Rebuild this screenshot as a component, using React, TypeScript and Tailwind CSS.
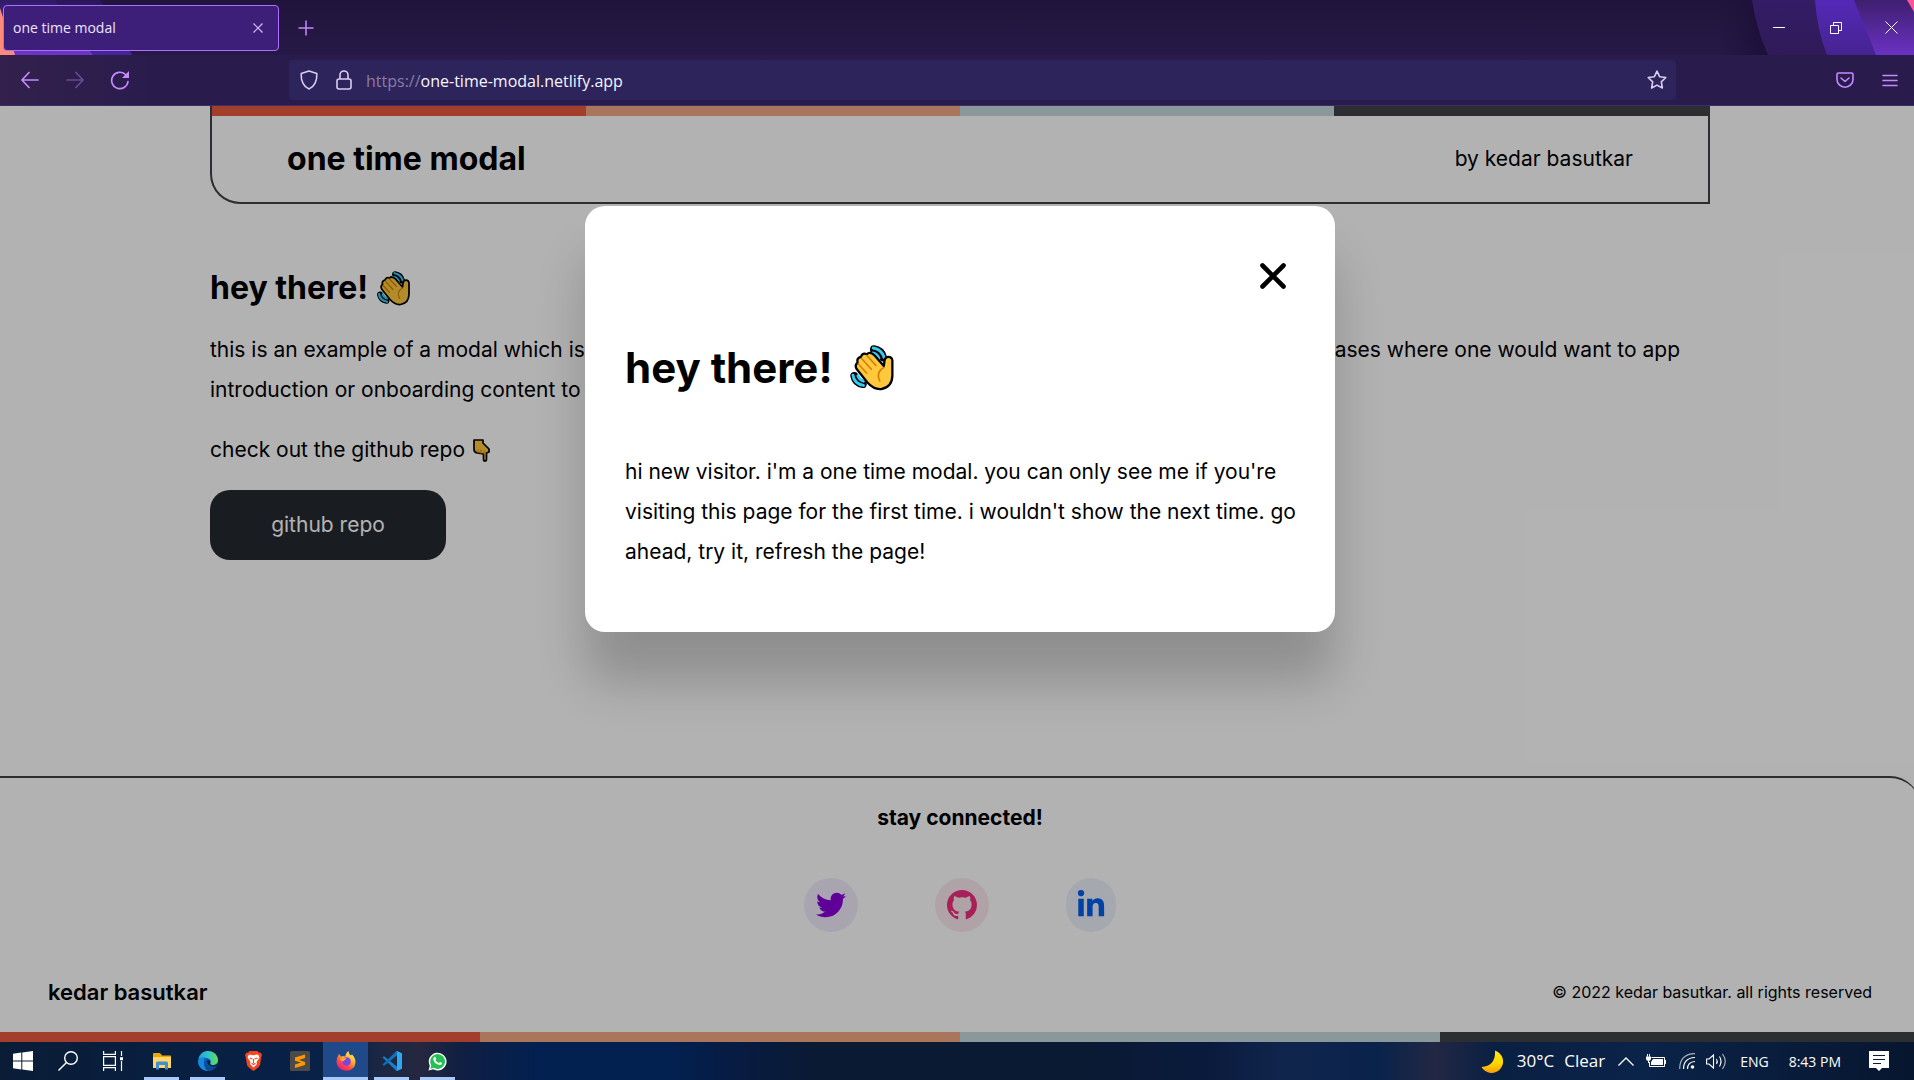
import { FaLinkedinIn, FaTwitter } from "react-icons/fa";
import { BsGithub } from "react-icons/bs";
import type { ReactNode } from "react";

function WaveEmoji({ className }: { className: string }) {
  return (
    <svg viewBox="26 28 136 140" className={className} role="img" aria-label="waving hand" strokeLinecap="round" strokeLinejoin="round" fill="none">
      <g stroke="#000" strokeWidth="24">
        <path d="M100 41Q122 44 128 66M40 122Q44 144 66 147" />
      </g>
      <g stroke="#35cbf5" strokeWidth="9">
        <path d="M98 37Q124 42 131 66M97 52Q109 55 115 68M36 120Q40 146 68 151M51 122Q55 134 68 138" />
      </g>
      <path d="M130 92L102 60Q88 46 78 56Q66 50 60 64Q46 68 50 82Q40 90 48 102L80 142Q100 164 122 162Q156 156 156 120L156 76Q155 64 144 64Q134 64 132 76Z" fill="#ffc83d" stroke="#000" strokeWidth="7" />
      <path d="M63 70L92 102M78 60L106 90M52 85L78 114M131 96Q104 110 118 138" stroke="#d67d00" strokeWidth="4.5" />
    </svg>
  );
}

function PointDownEmoji() {
  return (
    <svg viewBox="0 0 18 23" className="h-[23px] w-[18px]" role="img" aria-label="pointing down" strokeLinejoin="round" strokeLinecap="round">
      <path d="M1 1H10V4L16 10V13L13.500 14V20Q13.500 22 12 22Q10.500 22 10.500 20V15L4 14Q1 13.500 1 10Z" fill="#ffc83d" stroke="#000" strokeWidth="1.700" />
      <path d="M5 14V11M8 14.500V11M11 15V12" stroke="#d67d00" strokeWidth="1" />
    </svg>
  );
}

function Stripes() {
  return (
    <div className="grid h-2.5 grid-cols-4">
      <span className="bg-[#ea5a41]" />
      <span className="bg-[#f3aa85]" />
      <span className="bg-[#c6dae0]" />
      <span className="bg-[#404247]" />
    </div>
  );
}

function StripArt() {
  return (
    <>
      <svg className="absolute top-0 left-0 h-[55px] w-[140px]" viewBox="0 0 140 55" aria-hidden="true">
        <defs>
          <linearGradient id="l1" x2="0" y2="1"><stop stopColor="#2f1a66" /><stop offset="1" stopColor="#6f35cb" /></linearGradient>
          <linearGradient id="l2" x2="0" y2="1"><stop stopColor="#2a1858" /><stop offset="1" stopColor="#46259a" /></linearGradient>
        </defs>
        <path d="M55 0H100Q120 25 132 55H93Z" fill="url(#l2)" />
        <path d="M0 0H55L93 55H0Z" fill="url(#l1)" />
        <path d="M0 8L15 55H0Z" fill="#ff8a78" />
      </svg>
      <svg className="absolute top-0 right-0 h-[55px] w-[194px]" viewBox="0 0 194 55" aria-hidden="true">
        <defs>
          <linearGradient id="r0"><stop stopColor="#1d113a" stopOpacity="0" /><stop offset="1" stopColor="#1a0f38" /></linearGradient>
          <linearGradient id="r1" x2="0" y2="1"><stop stopColor="#341d66" /><stop offset="1" stopColor="#301a58" /></linearGradient>
          <linearGradient id="r2" x2="0" y2="1"><stop stopColor="#5429b8" /><stop offset="1" stopColor="#462391" /></linearGradient>
          <linearGradient id="r3" x2="0" y2="1"><stop stopColor="#3f1f70" /><stop offset="1" stopColor="#6a31c2" /></linearGradient>
        </defs>
        <path d="M0 0H35L50 55H0Z" fill="url(#r0)" />
        <path d="M32 0Q36 28 48 55H194V0Z" fill="url(#r1)" />
        <path d="M95 0Q97 30 107 55H194V0Z" fill="url(#r2)" />
        <path d="M134 0L156 55H194V0Z" fill="url(#r3)" />
        <path d="M187 0L194 12V0Z" fill="#ff5596" />
      </svg>
    </>
  );
}

function ChromeButton({ label, children, className = "w-[45px]" }: { label: string; children: ReactNode; className?: string }) {
  return (
    <button aria-label={label} className={`flex h-10 items-center justify-center ${className}`}>
      {children}
    </button>
  );
}

function BrowserChrome() {
  return (
    <header className="font-['Open_Sans',sans-serif]">
      <div className="relative h-[55px] bg-linear-to-b from-[#20143b] to-[#271947]">
        <StripArt />
        <div className="relative flex h-full items-center pl-[3px]">
          <div className="flex h-[46px] w-[276px] items-center justify-between rounded-[4px] border border-[#ac70ff] bg-[#3d1f7a] pl-[9px] text-[14px] text-[#ede5fb]">
            <span>one time modal</span>
            <button aria-label="Close tab" className="flex size-10 items-center justify-center">
              <svg viewBox="0 0 10 10" className="size-2.5" stroke="#d3bdf5" strokeWidth="1.200"><path d="M0.500 0.500L9.500 9.500M9.500 0.500L0.500 9.500" /></svg>
            </button>
          </div>
          <button aria-label="New tab" className="flex h-10 w-[54px] items-center justify-center">
            <svg viewBox="0 0 16 16" className="size-4" stroke="#c689ff" strokeWidth="1.500"><path d="M8 0.500V15.500M0.500 8H15.500" /></svg>
          </button>
          <div className="ml-auto flex">
            <ChromeButton label="Minimize" className="w-[57px]">
              <svg viewBox="0 0 12 12" className="size-3" stroke="#fff"><path d="M0 5.500H12" /></svg>
            </ChromeButton>
            <ChromeButton label="Restore" className="w-[57px]">
              <svg viewBox="0 0 12 12" className="size-3" stroke="#fff" fill="none"><path d="M0.500 3.500H8.500V11.500H0.500ZM3.500 3.500V0.500H11.500V8.500H8.500" /></svg>
            </ChromeButton>
            <ChromeButton label="Close window" className="w-[50px] pl-1">
              <svg viewBox="0 0 13 13" className="size-[13px]" stroke="#fff"><path d="M0.500 0.500L12.500 12.500M12.500 0.500L0.500 12.500" /></svg>
            </ChromeButton>
          </div>
        </div>
      </div>
      <div className="flex h-[51px] items-center border-b border-[#3a2d6c] bg-[#291c4c] bg-linear-to-r from-[#33204c] to-[#291c4c] to-[8%] pl-[7px]">
        <ChromeButton label="Back">
          <svg viewBox="0 0 18 18" className="size-[18px]" stroke="#c689ff" strokeWidth="1.700" fill="none" strokeLinecap="round" strokeLinejoin="round"><path d="M17 9H1M8 1.500L1 9L8 16.500" /></svg>
        </ChromeButton>
        <ChromeButton label="Forward">
          <svg viewBox="0 0 18 18" className="size-[18px] opacity-40" stroke="#c689ff" strokeWidth="1.700" fill="none" strokeLinecap="round" strokeLinejoin="round"><path d="M1 9H17M10 1.500L17 9L10 16.500" /></svg>
        </ChromeButton>
        <ChromeButton label="Reload">
          <svg viewBox="0 0 20 20" className="size-5" stroke="#c689ff" strokeWidth="1.700" fill="none" strokeLinecap="round"><path d="M18 11.500A8.200 8.200 0 1 1 15.500 4.500" /><path d="M19 1V8H12Z" fill="#c689ff" stroke="none" /></svg>
        </ChromeButton>
        <div className="mr-[146px] ml-[147px] flex h-10 flex-1 items-center rounded-[4px] bg-[#2d245b] pl-[11px] text-[16px]">
          <svg viewBox="0 0 18 20" className="h-5 w-[18px]" stroke="#d8cdf2" strokeWidth="1.600" fill="none" strokeLinejoin="round"><path d="M9 1L16.800 3.600C17.300 11 14 17 9 19C4 17 0.700 11 1.200 3.600Z" /></svg>
          <svg viewBox="0 0 16 20" className="ml-[18px] h-5 w-4" stroke="#d8cdf2" strokeWidth="1.600" fill="none"><rect x="1" y="9" width="14" height="10" rx="2" /><path d="M4 9V5A4 4 0 0 1 12 5V9" /></svg>
          <label htmlFor="address" className="ml-[14px] pt-0.5 text-[#8b7ba6]">https://</label>
          <input id="address" defaultValue="one-time-modal.netlify.app" className="min-w-0 flex-1 bg-transparent pt-0.5 text-[#f8f6ff] outline-none" />
          <button aria-label="Bookmark" className="flex h-10 w-[38px] items-center justify-center">
            <svg viewBox="0 0 20 20" className="size-5" stroke="#d8cdf2" strokeWidth="1.600" fill="none" strokeLinejoin="round"><path d="M10 1.200L12.600 6.700L18.800 7.500L14.300 11.800L15.400 18L10 15.100L4.600 18L5.700 11.800L1.200 7.500L7.400 6.700Z" /></svg>
          </button>
        </div>
        <ChromeButton label="Save to Pocket">
          <svg viewBox="0 0 18 16" className="h-4 w-[18px]" stroke="#c689ff" strokeWidth="1.600" fill="none" strokeLinecap="round" strokeLinejoin="round"><path d="M2.500 1H15.500Q17 1 17 2.500V7.500A8 7.700 0 0 1 1 7.500V2.500Q1 1 2.500 1ZM5 6L9 9.500L13 6" /></svg>
        </ChromeButton>
        <ChromeButton label="Menu" className="mr-[2px] w-[45px]">
          <svg viewBox="0 0 16 13" className="h-[13px] w-4" stroke="#c689ff" strokeWidth="1.500" strokeLinecap="round"><path d="M1 1.500H15M1 6.500H15M1 11.500H15" /></svg>
        </ChromeButton>
      </div>
    </header>
  );
}

function Modal() {
  return (
    <div className="absolute inset-0 flex items-start justify-center bg-black/30 pt-[100px]">
      <section role="dialog" aria-modal="true" aria-labelledby="modal-title" className="w-[750px] rounded-[20px] bg-white px-10 pt-10 pb-[60px] shadow-[0_50px_50px_rgba(0,0,0,0.2)]">
        <div className="flex justify-end">
          <button aria-label="Close" className="flex h-[60px] w-11 items-center justify-center">
            <svg viewBox="0 0 26 26" className="size-[26px]" stroke="#000" strokeWidth="4.600" strokeLinecap="round"><path d="M2.500 2.500L23.500 23.500M23.500 2.500L2.500 23.500" /></svg>
          </button>
        </div>
        <h2 id="modal-title" className="mt-8 flex items-center gap-4 text-[42px] leading-[60px] font-bold">
          hey there! <WaveEmoji className="size-[46px]" />
        </h2>
        <p className="mt-[54px] text-[21px] leading-10 whitespace-nowrap">
          hi new visitor. i'm a one time modal. you can only see me if you're
          <br />
          visiting this page for the first time. i wouldn't show the next time. go
          <br />
          ahead, try it, refresh the page!
        </p>
      </section>
    </div>
  );
}

function Page() {
  return (
    <div className="flex h-full flex-col">
      <header className="mx-auto w-[1500px] rounded-bl-[30px] border-2 border-t-0 border-[#404247]">
        <Stripes />
        <div className="flex h-[86px] items-center justify-between px-[75px]">
          <h1 className="text-[32px] font-bold">one time modal</h1>
          <p className="text-[21px]">by kedar basutkar</p>
        </div>
      </header>
      <main className="mx-auto mt-16 w-[1500px] flex-1 text-[21px] leading-10">
        <h2 className="flex items-center gap-2 text-[32px] font-bold">
          hey there! <WaveEmoji className="size-[35px]" />
        </h2>
        <p className="mt-[22px] w-[1470px]">
          <span className="flex justify-between">
            <span>this is an example of a modal which is shown only once to a visitor.</span>
            <span>it suits use cases where one would want to app</span>
          </span>
          introduction or onboarding content to new visitors.
        </p>
        <p className="mt-5 flex items-center gap-2">
          check out the github repo <PointDownEmoji />
        </p>
        <a href="https://github.com" className="mt-5 flex h-[70px] w-[236px] items-center justify-center rounded-[20px] bg-[#25292f] text-white">
          github repo
        </a>
      </main>
      <footer className="rounded-tr-[30px] border-t-2 border-[#404149] pt-5 leading-10">
        <h3 className="text-center text-[21px] font-bold">stay connected!</h3>
        <div className="mt-10 flex justify-center gap-[77px] text-[30px]">
          <a href="https://twitter.com" aria-label="Twitter" className="flex h-[54px] items-center rounded-full bg-[#f1ecfe] px-3 text-[#8900dc]"><FaTwitter /></a>
          <a href="https://github.com" aria-label="GitHub" className="flex h-[54px] items-center rounded-full bg-[#fbeaf1] px-3 text-[#f02f7e]"><BsGithub /></a>
          <a href="https://linkedin.com" aria-label="LinkedIn" className="flex h-[54px] items-center rounded-full bg-[#ecf3fb] px-2.5 text-[#005dec]"><FaLinkedinIn /></a>
        </div>
        <div className="mt-10 flex justify-between px-12 pb-5">
          <p className="text-[22px] font-semibold">kedar basutkar</p>
          <p className="text-[16px]">© 2022 kedar basutkar. all rights reserved</p>
        </div>
        <Stripes />
      </footer>
    </div>
  );
}

function TaskItem({ label, children, state = "idle" }: { label: string; children: ReactNode; state?: "idle" | "open" | "active" }) {
  return (
    <button aria-label={label} className={`flex h-full w-[45px] flex-col items-center ${state === "active" ? "bg-[#20498a]" : ""}`}>
      <span className="flex flex-1 items-center pt-[3px]">{children}</span>
      <span className={`h-[3px] ${state === "active" ? "w-full bg-[#a9c9f8]" : state === "open" ? "w-[35px] bg-[#a9c9f8]" : ""}`} />
    </button>
  );
}

function Taskbar() {
  return (
    <footer className="flex h-[38px] items-center bg-[#091b3a] bg-[linear-gradient(90deg,#0a1c36_0%,#082044_12%,#0a2148_18%,#1d2743_20%,#25273f_22%,#101f42_24%,#022050_28%,#022050_35%,#081b40_39%,#0a1a32_43%,#0a1a32_56%,#0a1a3c_63%,#10254c_67%,#0a234b_72%,#222743_75%,#0a2043_78%,#0a2348_86%,#07162f_100%)] font-['Open_Sans',sans-serif] text-white">
      <TaskItem label="Start">
        <svg viewBox="0 0 20 20" className="size-5" fill="#fff"><path d="M0 2.700L8.300 1.600V9.500H0ZM9.300 1.400L20 0V9.500H9.300ZM0 10.500H8.300V18.500L0 17.300ZM9.300 10.500H20V20L9.300 18.600Z" /></svg>
      </TaskItem>
      <TaskItem label="Search">
        <svg viewBox="0 0 20 20" className="size-5" stroke="#fff" strokeWidth="1.400" fill="none"><circle cx="13" cy="7" r="6.300" /><path d="M8.500 11.500L0.500 19.500" /></svg>
      </TaskItem>
      <TaskItem label="Task view">
        <svg viewBox="0 0 20 20" className="size-5" stroke="#fff" strokeWidth="1.200" fill="none"><path d="M0.600 5.600H12.400V14.400H0.600ZM0.600 0V3.400H12.400V0M0.600 20V16.600H12.400V20M18.500 0V5M18.500 10V20" /><path d="M17 6.200H20V9.200H17Z" fill="#fff" stroke="none" /></svg>
      </TaskItem>
      <div className="ml-1 flex h-full gap-px">
        <TaskItem label="File Explorer" state="open">
          <svg viewBox="0 0 18 17" className="h-[17px] w-[18px]"><path d="M0 1Q0 0 1 0H7L9 2.500H17Q18 2.500 18 3.500V15H0Z" fill="#e8a80c" /><path d="M0 4H18V15H0Z" fill="#ffd667" /><path d="M3 16.500V10Q3 8.500 4.500 8.500H13.500Q15 8.500 15 10V16.500H12V12H6V16.500Z" fill="#3f8fd6" /></svg>
        </TaskItem>
        <TaskItem label="Edge" state="open">
          <svg viewBox="0 0 20 20" className="size-5">
            <defs><linearGradient id="eg"><stop stopColor="#2a9fe0" /><stop offset="0.500" stopColor="#2fc4c8" /><stop offset="1" stopColor="#66de4e" /></linearGradient></defs>
            <circle cx="10" cy="10" r="10" fill="#0b5fb4" />
            <path d="M0.300 8.500C2 2 6 0 10 0C16 0 20 4.500 20 9C20 12.500 17.500 14 14.500 14C12 14 11.500 12.700 12.500 11.500C13.500 9.500 11.500 7 8 7C4 6.500 1.500 7 0.300 8.500Z" fill="url(#eg)" />
            <path d="M0 10C0.500 7.500 3.500 6 7 6.500C5 9 5.500 15 10 19.900C4 20 0 15.500 0 10Z" fill="#1589dc" />
            <path d="M8.500 9C6.500 12 9 17 18 15.500C16 18.500 13 20 10 20C6 18 5 11 8.500 9Z" fill="#0c4b92" />
            <path d="M12.400 11.500C11.500 13 13 14.300 15 14.200Q18 14.300 20 12Q19 15 17.500 15.500C11 16.500 8.500 12.500 8.900 9.300Q12 8 12.400 11.500Z" fill="#091f42" />
          </svg>
        </TaskItem>
        <TaskItem label="Brave">
          <svg viewBox="0 0 17 20" className="h-5 w-[17px]"><path d="M4.500 0H12.500L14 1.700L15.500 1.500L17 4L16.300 6L15 14Q14 16.500 8.500 20Q3 16.500 2 14L0.700 6L0 4L1.500 1.500L3 1.700Z" fill="#f4451e" /><path d="M4 3.500L8.500 4.200L13 3.500L14.500 6.500L11.500 11L12 13L8.500 16.500L5 13L5.500 11L2.500 6.500Z" fill="#fff" /><path d="M4.500 7L7.500 8M12.500 7L9.500 8M8.500 8V12M6.500 12.200L8.500 13.500L10.500 12.200" stroke="#f4451e" strokeWidth="1.100" fill="none" /></svg>
        </TaskItem>
        <TaskItem label="Sublime Text">
          <svg viewBox="0 0 20 20" className="size-5"><rect width="20" height="20" rx="1.500" fill="#4a4a4a" /><path d="M15 3.500V7L9 9L15 11V14L5 17V13.500L11 11.500L5 9.700V6.500Z" fill="#ff9800" /></svg>
        </TaskItem>
        <TaskItem label="Firefox" state="active">
          <svg viewBox="0 0 20 20" className="size-5">
            <defs><linearGradient id="ff" x1="0.800" y1="0.100" x2="0.200" y2="1"><stop stopColor="#fff44f" /><stop offset="0.350" stopColor="#ffa436" /><stop offset="0.650" stopColor="#ff4a41" /><stop offset="1" stopColor="#e3128d" /></linearGradient></defs>
            <path d="M3 3L5 5.500Q7 4.500 9 5.500Q9.500 2 12.500 0Q12.500 3 15 4.500L16 3.500Q19.500 7 19.500 11Q19 19.500 10 19.800Q1 19 0.500 11Q0.500 6.500 3 3Z" fill="url(#ff)" />
            <circle cx="10.500" cy="10.500" r="4.300" fill="#7a45e0" />
            <path d="M4.500 7Q7 5.500 10.500 7.500Q8.500 8.500 8 10Q6 11 4.500 9Z" fill="#ffa436" />
          </svg>
        </TaskItem>
        <TaskItem label="Visual Studio Code" state="open">
          <svg viewBox="0 0 20 20" className="size-5"><path d="M0.500 6.500L2 5.200L15 15.500V19.500L14 19.500Z" fill="#1380c8" /><path d="M0.500 13.500L2 14.800L15 4.500V0.500H14Z" fill="#0f72b8" /><path d="M14 0.300L15 0L20 2.300V17.700L15 20L14 19.500Q15 19.500 15 18V2Q15 0.500 14 0.300Z" fill="#2fa8f2" /></svg>
        </TaskItem>
        <TaskItem label="WhatsApp" state="open">
          <svg viewBox="0 0 19 19" className="size-[19px]"><path d="M0.500 18.500L1.800 13.800A8.900 8.900 0 1 1 5.200 17.300Z" fill="#fff" /><path d="M2.300 16.700L3.300 13.400A7.400 7.400 0 1 1 5.700 15.800Z" fill="#25c053" /><path d="M6.300 5Q7.300 4.500 7.800 5.700L8.200 7Q8.300 7.500 7.500 8.200Q8.700 10.300 11 11L12 10Q14.500 10.800 14 11.700Q13.500 13.300 11.500 13Q6.500 12 5.300 7.500Q5.100 6 6.300 5Z" fill="#fff" /></svg>
        </TaskItem>
      </div>
      <div className="ml-auto flex items-center">
        <svg viewBox="0 0 23 23" className="size-[23px]"><defs><linearGradient id="mn" x2="0" y2="1"><stop stopColor="#ffe81a" /><stop offset="0.600" stopColor="#ffd500" /><stop offset="1" stopColor="#f99b0c" /></linearGradient></defs><path d="M14 0.500A11.500 11.500 0 1 1 0.500 17Q15 15.500 14 0.500Z" fill="url(#mn)" /></svg>
        <span className="ml-[13px] text-[17px]">30°C</span>
        <span className="ml-[10px] text-[17px]">Clear</span>
        <button aria-label="Show hidden icons" className="ml-[13px]">
          <svg viewBox="0 0 16 9" className="h-[9px] w-4" stroke="#fff" strokeWidth="1.300" fill="none"><path d="M0.500 8.500L8 1L15.500 8.500" /></svg>
        </button>
        <svg viewBox="0 0 20 14" className="ml-3 h-3.5 w-5" stroke="#fff" fill="none"><path d="M5.500 3.500H18.500V12.500H3.500V8M19.500 6V10" /><path d="M7 5H17V11H5V8Z" fill="#fff" stroke="none" /><path d="M0 2.500H5V5Q4.500 7 2.500 7Q0.500 7 0 5Z" fill="#fff" stroke="none" /><path d="M1.500 0V2.500M3.500 0V2.500M2.500 7V9" /></svg>
        <svg viewBox="0 0 16 16" className="ml-[13px] size-4" stroke="#fff" strokeWidth="1.200" fill="none"><path d="M0.700 16Q0.700 1 16 0.700" opacity="0.650" /><path d="M4.500 16Q4.500 5 16 4.500M8.500 16Q8.500 9 16 8.500" /><circle cx="13.500" cy="14" r="1.800" fill="#fff" stroke="none" /></svg>
        <svg viewBox="0 0 21 17" className="ml-[11px] h-[17px] w-[21px]" stroke="#fff" strokeWidth="1.100" fill="none"><path d="M0.600 6H3L7.500 2V15L3 11H0.600ZM10.500 6Q12 8.500 10.500 11M13.500 3.500Q16.500 8.500 13.500 13.500" /><path d="M16.500 1Q22 8.500 16.500 16" opacity="0.700" /></svg>
        <span className="ml-[13px] text-[14px]">ENG</span>
        <span className="ml-[20px] text-[14px]">8:43 PM</span>
        <button aria-label="Notifications" className="mr-[25px] ml-[28px]">
          <svg viewBox="0 0 20 20" className="size-5"><path d="M0 0H20V17H13L10 20L7 17H0Z" fill="#fff" /><path d="M4 4.500H16M4 8.500H16M4 12.500H12" stroke="#0a1c38" /></svg>
        </button>
      </div>
    </footer>
  );
}

export default function App() {
  return (
    <div className="flex h-screen flex-col overflow-hidden">
      <BrowserChrome />
      <div className="relative min-h-0 flex-1 overflow-hidden">
        <div className="relative h-full w-[calc(100%+6px)] bg-white font-['Inter',sans-serif] text-black">
          <Page />
          <Modal />
        </div>
      </div>
      <Taskbar />
    </div>
  );
}
